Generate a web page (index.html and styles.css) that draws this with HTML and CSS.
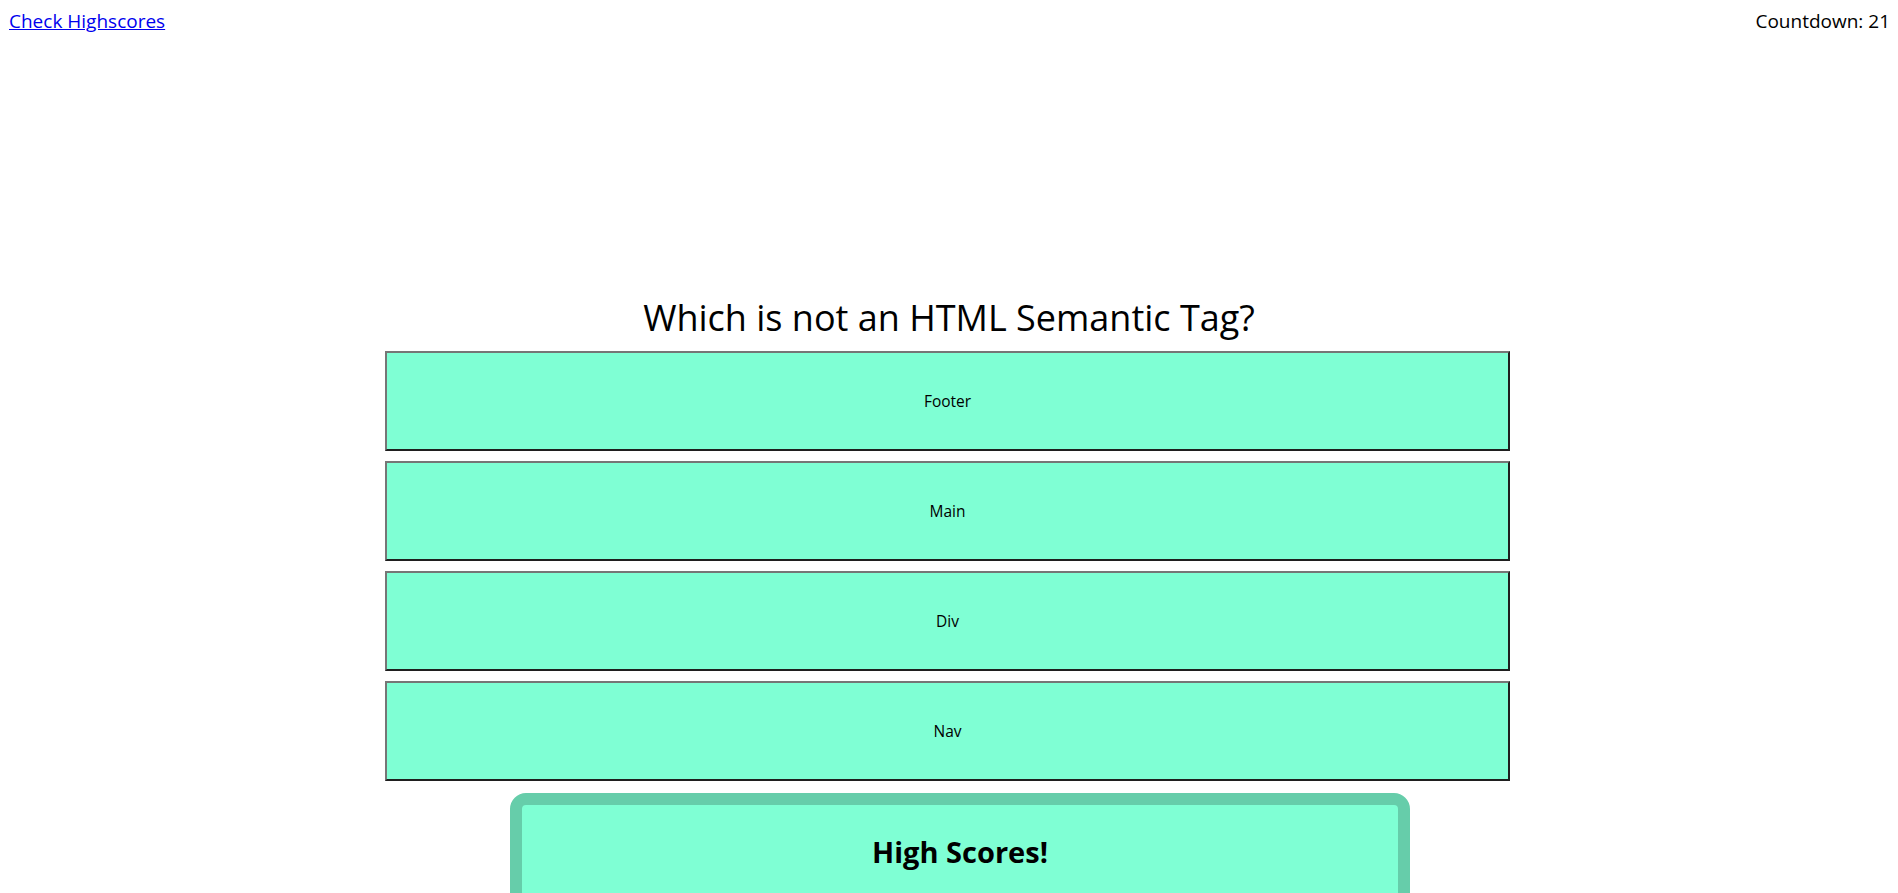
FILE: index.html
```html
<!DOCTYPE html>
<html lang="en">
<head>
<meta charset="utf-8">
<title>Code Quiz</title>
<link rel="stylesheet" href="styles.css">
</head>
<body>
<header class="topbar">
  <a class="highscores-link" href="#">Check Highscores</a>
  <div class="countdown">Countdown: 21</div>
</header>
<main class="quiz">
  <h1 class="question">Which is not an HTML Semantic Tag?</h1>
  <div class="answers">
    <button class="answer">Footer</button>
    <button class="answer">Main</button>
    <button class="answer">Div</button>
    <button class="answer">Nav</button>
  </div>
  <div class="score-wrap">
    <section class="scorebox">
      <h2 class="score-title">High Scores!</h2>
    </section>
  </div>
</main>
</body>
</html>
```

FILE: styles.css
```css
html, body {
  background: #ffffff;
}
body {
  margin: 8px;
  font-family: "Open Sans", "Noto Sans", sans-serif;
  color: #000;
  overflow: hidden;
}
.topbar {
  display: flex;
  justify-content: space-between;
  align-items: flex-start;
}
.highscores-link {
  margin-left: 1px;
  font-size: 19px;
  color: #0000ee;
  text-decoration: underline;
  line-height: 27px;
}
.countdown {
  font-size: 19px;
  line-height: 27px;
  color: #000;
}
.quiz {
  margin-top: 261px;
}
.question {
  margin: 0 0 12px;
  text-align: center;
  font-weight: 400;
  font-size: 36px;
  line-height: 43px;
}
.answers {
  display: flex;
  flex-direction: column;
  gap: 10px;
  margin-left: calc(50% - 564px);
  width: 1125px;
}
.answer {
  display: block;
  width: 100%;
  height: 100px;
  margin: 0;
  padding: 0;
  background: #7fffd4;
  border: 2px solid;
  border-color: #767676 #1f1f1f #1f1f1f #767676;
  font-family: "Open Sans", "Noto Sans", sans-serif;
  font-size: 15.5px;
  color: #000;
}
.score-wrap {
  padding-left: 22px;
  margin-top: 12px;
}
.scorebox {
  width: 900px;
  box-sizing: border-box;
  margin: 0 auto;
  min-height: 200px;
  background: #7fffd4;
  border: 12px solid #66cdaa;
  border-radius: 16px;
}
.score-title {
  margin: 0;
  padding-top: 27px;
  text-align: center;
  font-size: 29px;
  font-weight: 700;
  line-height: 40px;
}
```
